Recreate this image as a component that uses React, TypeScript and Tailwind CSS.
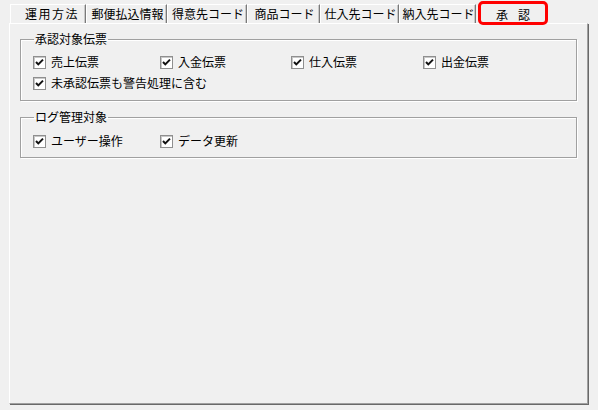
import React from "react";

const tabs = [
  { label: "運用方法", w: "w-[76px]", extra: "tracking-[1.5px] pl-[8px]" },
  { label: "郵便払込情報", w: "w-[81px]", extra: "pl-[2px]" },
  { label: "得意先コード", w: "w-[80px]", extra: "pl-[2px]" },
  { label: "商品コード", w: "w-[73px]", extra: "pl-[2px]" },
  { label: "仕入先コード", w: "w-[79px]", extra: "pl-[2px]" },
  { label: "納入先コード", w: "w-[77px]", extra: "pl-[2px]" },
];

const Check = ({ label }: { label: string }) => (
  <label className="flex items-center gap-[5px] h-[14px] whitespace-nowrap">
    <span className="w-[13px] h-[13px] border border-[#8f8f8f] bg-white flex items-center justify-center shrink-0 shadow-[inset_1px_1px_0_#c8c8c8]">
      <svg width="11" height="11" viewBox="0 0 11 11">
        <path d="M2 5 L4.3 7.4 L9 2.6" fill="none" stroke="#111" strokeWidth="2" />
      </svg>
    </span>
    <span>{label}</span>
  </label>
);

const Group = ({ title, children, className = "" }: { title: string; children: React.ReactNode; className?: string }) => (
  <fieldset className={`border border-[#a0a0a0] shadow-[inset_1px_1px_0_white,1px_1px_0_white] pl-[12px] ${className}`}>
    <legend className="ml-[1px] px-[1px] leading-[14px]">{title}</legend>
    {children}
  </fieldset>
);

export default function App() {
  return (
    <div
      className="w-[598px] h-[410px] bg-[#f0f0f0] text-[12px] text-black leading-[14px] overflow-hidden"
      style={{ fontFamily: '"Noto Sans CJK JP", "Noto Sans", sans-serif' }}
    >
      {/* tab strip */}
      <div className="flex items-end h-[23px] pl-[10px] relative z-10">
        {tabs.map((t) => (
          <div
            key={t.label}
            className={`${t.w} ${t.extra} h-[19px] flex items-center justify-center border-t border-l border-white border-r border-r-[#7a7a7a] shadow-[inset_-1px_0_0_#c8c8c8]`}
          >
            {t.label}
          </div>
        ))}
        <div className="w-[70px] h-[24px] -mb-[2px] ml-[2px] border-[3px] border-[#f00] rounded-[5px] bg-[#f0f0f0] flex items-start justify-center gap-[10px] pt-[4px]">
          <span>承</span>
          <span>認</span>
        </div>
      </div>

      {/* panel */}
      <div className="ml-[9px] w-[579px] h-[381px] border-l border-t border-white border-r border-b border-r-[#a0a0a0] border-b-[#a0a0a0] shadow-[1px_1px_0_#696969] pt-[8px] pl-[10px] pr-[10px]">
        <Group title="承認対象伝票" className="pb-[10px]">
          <div className="grid grid-cols-[127px_131px_132px_auto] mt-[9px]">
            <Check label="売上伝票" />
            <Check label="入金伝票" />
            <Check label="仕入伝票" />
            <Check label="出金伝票" />
          </div>
          <div className="mt-[7px]">
            <Check label="未承認伝票も警告処理に含む" />
          </div>
        </Group>
        <Group title="ログ管理対象" className="mt-[9px] pb-[9px]">
          <div className="grid grid-cols-[127px_auto] mt-[10px]">
            <Check label="ユーザー操作" />
            <Check label="データ更新" />
          </div>
        </Group>
      </div>
    </div>
  );
}
